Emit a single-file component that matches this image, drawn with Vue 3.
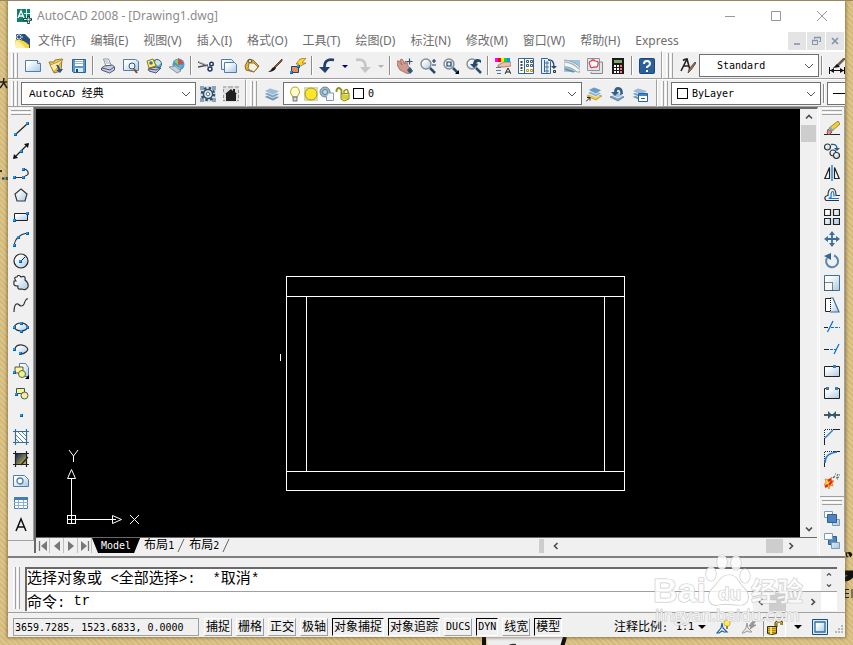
<script setup>
import { ref } from 'vue'

const menus = ['文件(F)', '编辑(E)', '视图(V)', '插入(I)', '格式(O)', '工具(T)', '绘图(D)', '标注(N)', '修改(M)', '窗口(W)', '帮助(H)', 'Express']

const standardBar = [
  'new', 'open', 'save', '|', 'print', 'preview', 'publish', 'globe', '|', 'cut', 'copy', 'paste', 'brush', 'block', '|',
  'undo', 'caret', 'redo', 'caretOff', '|', 'pan', 'zoom', 'zoomWindow', 'zoomPrev', '|',
  'properties', 'design', 'palettes', 'sheets', 'markup', 'calc', '|', 'help'
]
const drawBar = ['line', 'xline', 'pline', 'polygon', 'rect', 'arc', 'circle', 'cloud', 'spline', 'ellipse', 'ellipseArc', 'insert', 'makeBlock', 'point', 'hatch', 'gradient', 'region', 'table', 'mtext']
const modifyBar = ['erase', 'copyObj', 'mirror', 'offset', 'array', 'move', 'rotate', 'scale', 'stretch', 'trim', 'extend', 'breakPoint', 'break', 'join', 'chamfer', 'fillet', 'explode']
const orderBar = ['front', 'back']

const modes = [
  { text: '捕捉' }, { text: '栅格' }, { text: '正交' }, { text: '极轴' },
  { text: '对象捕捉', on: true }, { text: '对象追踪', on: true },
  { text: 'DUCS', latin: true }, { text: 'DYN', latin: true, on: true },
  { text: '线宽' }, { text: '模型', on: true }
]
const navs = ['first', 'prev', 'next', 'last']
const command = ref('tr')

const page = 'fill="url(#pale)" stroke="#4f7fa8"'
const dots = (...pts) => pts.map(([x, y]) => `<rect x="${x}" y="${y}" width="3" height="3" fill="#0a5fb0"/><rect x="${x}" y="${y}" width="2" height="2" fill="#1c9af5"/>`).join('')
const lens = '<path d="M10 10l5 5" stroke="#284b70" stroke-width="2.500"/><circle cx="6" cy="6" r="5" fill="url(#pale)" stroke="#8a8a8a" stroke-width="1.400"/>'
const stack = '<g stroke="#f4f7fa" stroke-width=".7"><path d="M0 11l6-3 10 3-7 4z" fill="#7893ad"/><path d="M0 8l6-3 10 3-7 4z" fill="#7fa3c4"/><path d="M0 5l6-3 10 3-7 4z" fill="#9dbbd6"/></g>'

const icons = {
  app: '<path d="M1 1h13v13H1z" fill="#12806f"/><path d="M2 10L5 3l3 7M3 8h4" stroke="#fff" stroke-width="1.300" fill="none"/><path d="M10.500 1v9M8 5.500h6" stroke="#d7f3ee"/><path d="M7 11.500h9M12.500 8v8" stroke="#163c46" stroke-width="2.500"/><path d="M8 11.500h7M12.500 9v6" stroke="#fff"/><path d="M11 10h3v3h-3z" fill="#cfe" stroke="#123c46" stroke-width=".8"/>',
  doc: '<path d="M1 1h9l5 5v9H1z" fill="#264f7e"/><path d="M0 7q8-1 14 5v3H1z" fill="#fcd638"/><path d="M1 8q6 1 9 7H1z" fill="#fff2a8"/><path d="M0 4h8M4 0v8M1.500 1.500l5 5M6.500 1.500l-5 5" stroke="#fff" stroke-width=".9"/><circle cx="4" cy="4" r="1.300" fill="#264f7e"/>',
  new: `<path d="M.5 2.500h12l3 3v8H.5z" ${page}/><path d="M12.500 2.500v3h3" fill="#fff" stroke="#4f7fa8"/>`,
  open: '<path d="M1 4h5l1-2 7-1-1 12-7 2z" fill="#f5cb55" stroke="#9a7a28"/><path d="M2 7l8-3 5-3-5 8-4 5z" fill="#ffe9a3" stroke="#a27e22" stroke-width=".7"/><path d="M8 7q3-1 4 4h3l-3 4-4-3h2Q10 9 8 7z" fill="#2c5687"/>',
  save: '<path d="M1.500 1.500h13v13h-12l-1-1z" fill="#5b9ad0" stroke="#2e638f"/><path d="M4 2h8v6H4z" fill="#fff"/><path d="M4 3.500h8M4 5.500h8" stroke="#9db6ce"/><path d="M4 10h8v4H4z" fill="#d9e8f5"/><path d="M5 11h2v3H5z" fill="#174b7d"/>',
  print: '<path d="M3.500 1h5l3 7H6z" fill="#fff" stroke="#8a93ab"/><path d="M1.500 10l3-2 8-1 2 2v3l-5 3-8-3z" fill="#c8cddd" stroke="#4d5878"/><path d="M2 10l8 2 4-3" stroke="#4d5878" fill="none"/><path d="M5 3h3M6 5h4" stroke="#9aa" fill="none"/>',
  preview: `<path d="M.5 1.500h12l3 2v9H.5z" ${page}/><path d="M11 11l3 4" stroke="#8a4f1b" stroke-width="2"/><circle cx="9" cy="8" r="3" fill="#e5f5ff" stroke="#3a526f"/>`,
  publish: '<circle cx="11" cy="6" r="4.500" fill="#5fa6d6" stroke="#37678d"/><path d="M10 2q4 0 5 3l-3 3-3-3z" fill="#cfe9d5"/><path d="M1 3l6-2 3 7-7 2z" fill="#fff06b" stroke="#9b761a"/><circle cx="5" cy="5" r="1.800" fill="#2577ba"/><path d="M2 11l8-2 5 1-5 5-7-2z" fill="#c1c8dc" stroke="#4d5878"/><path d="M3 11l7 1 4-2" stroke="#4d5878" fill="none"/>',
  globe: '<circle cx="9.500" cy="6.500" r="6" fill="#4a97cb"/><path d="M5 3l4 4V1z" fill="#7fcf74"/><path d="M9 7V0l6 5z" fill="#d54f3a"/><path d="M9 7h6l-5 5z" fill="#58b1d9"/><path d="M6 7l5 4-3 2-4-3z" fill="#f2db60"/><path d="M0 9l6-1 6 5-4 2z" fill="#c6cedb" stroke="#76839a" stroke-width=".8"/>',
  cut: '<path d="M0 4l10 4M0 9l10-2" stroke="#4a4d55" stroke-width="1.600"/><path d="M1 4l8 3" stroke="#ddd" stroke-width=".7"/><circle cx="13.500" cy="6" r="1.800" fill="none" stroke="#1d385d" stroke-width="1.400"/><circle cx="12" cy="11" r="2" fill="none" stroke="#1d385d" stroke-width="1.400"/>',
  copy: `<path d="M.5 1.500h10l2 2v8H.5z" ${page}/><path d="M3.500 4.500h10l2 2v8h-12z" ${page}/>`,
  paste: '<path d="M1 8l3-6 5 0 6 6-5 6-8-2z" fill="#eab72f" stroke="#8a6a22"/><circle cx="6" cy="3" r="1.800" fill="#ddd" stroke="#604b28"/><path d="M5 5h5l4 4-4 5-6-3z" fill="#f6f2e0" stroke="#89744a"/>',
  brush: '<path d="M15 1L7 9l1 1 7-7z" fill="#a45a22" stroke="#403428" stroke-width=".8"/><path d="M8 9q-3 0-4 3l-3 2q6 0 8-4z" fill="#1a1a1a"/>',
  block: '<path d="M1.500 8.500h7v6h-7z" fill="#f08a4a" stroke="#1c4683"/><path d="M10 1l6-1-4 5h4l-9 5 2-4H6z" fill="#ffd62b" stroke="#906815" stroke-width=".7"/>' + dots([7, 7], [0, 13]),
  undo: '<path d="M15 2Q5 0 5.500 10" fill="none" stroke="#203f6a" stroke-width="2.600"/><path d="M0 9h11l-5 6z" fill="#203f6a"/>',
  redo: '<path d="M1 2q10-2 9.500 8" fill="none" stroke="#c6c6ca" stroke-width="2.600"/><path d="M5 9h11l-6 6z" fill="#c6c6ca"/>',
  caret: '<path d="M5 7h6L8 10z" fill="#000080"/>',
  caretOff: '<path d="M5 7h6L8 10z" fill="#b4b4b4"/>',
  pan: '<path d="M0 3l2 0 3 4-2-5 2-1 3 5 0-3 2 1 1 4 4 4-4 4-4-2-4-2-3-5z" fill="#cf9a8f" stroke="#9a5a50" stroke-width=".7"/><path d="M10 12l3-3 3 4-3 3z" fill="#31577c"/><path d="M9.500 3.500h6M12.500 .5v6" stroke="#284e78" stroke-width="1.200"/>',
  zoom: lens + '<path d="M12 3h4M14 1v4M12 7h4" stroke="#193d69" stroke-width="1.200"/>',
  zoomWindow: lens + '<path d="M4 4h4v4H4z" fill="none" stroke="#24496d" stroke-width="1.200"/><path d="M16 12v4h-4z" fill="#000"/>',
  zoomPrev: lens + '<path d="M15 2q-7-3-8 4H4l4 4 4-4h-2q1-4 5-1z" fill="#214775"/>',
  properties: '<path d="M0 0h3v4H0z" fill="#f0f"/><path d="M3 0h3v4H3z" fill="#f00"/><path d="M6 0h3v4H6z" fill="#fe0"/><path d="M9 0h3v4H9z" fill="#0d3"/><path d="M12 0h3v4h-3z" fill="#09f"/><path d="M3 7l6-3 7 0v4l-7 1-6 0z" fill="#ecc0ac" stroke="#a07263" stroke-width=".8"/><path d="M1 9.500h5M1 12.500h5M2 15.500h4" stroke="#58799a"/><path d="M10 16l3-6 3 6m-5-2h4" stroke="#222" fill="none"/>',
  design: '<path d="M.5 .5h15v15H.5z" fill="#fff" stroke="#2f669c"/><path d="M6.500 1v14" stroke="#2f669c"/><path d="M3.500 3v10" stroke="#444" stroke-width="2" stroke-dasharray="2 1"/><g fill="none" stroke="#44566b"><path d="M8.500 2.500h2v2h-2zM12.500 2.500h2v2h-2zM8.500 6.500h2v2h-2zM12.500 6.500h2v2h-2z"/><path d="M8.500 11.500h2v2h-2zM12.500 11.500h2v2h-2z" stroke="#c09a00"/></g>',
  palettes: '<path d="M.5 .5h6l3 3v12h-9z" fill="#e6f1ff" stroke="#2f669c"/><path d="M3.500 2v12" stroke="#2f669c"/><path d="M5 4h2v2H5zM5 8h2v2H5zM5 12h2v2H5z" stroke="#44566b" stroke-width=".8" fill="none"/><path d="M7 2q6-1 6 7" fill="none" stroke="#244a72" stroke-width="1.400"/><path d="M10 8h6l-3 3z" fill="#244a72"/><path d="M12.500 12.500h2v2h-2z" fill="#edc64d" stroke="#333"/>',
  sheets: '<path d="M0 2h16v12H0z" fill="#9cc4e0"/><path d="M0 2q8 0 16 7v5l-3 0Q6 8 0 9z" fill="#f2f5f5" stroke="#8b979e" stroke-width=".8"/><path d="M1 4q7 0 14 7" stroke="#a9b6bc" fill="none" stroke-width="1.500"/><path d="M1 11l9 3" stroke="#6c8996" stroke-width="1.500"/>',
  markup: '<path d="M5 4h10.500v11.500H4V14" fill="#e4e4e4" stroke="#888"/><path d="M.5 .5h12v12H.5z" fill="#dce9f5" stroke="#8593a6"/><path d="M4 3q2-2 4 0 4 0 3 3 0 4-4 3-4 2-4-2-2-3 1-4z" fill="#fff" stroke="#f23030" stroke-width="1.200"/>',
  calc: '<path d="M2 0h12v16H2z" fill="#1a1a1a"/><path d="M4 2h8v3H4z" fill="#7da866"/><path d="M4 7h2v2H4zM7 7h2v2H7zM4 10h2v2H4zM7 10h2v2H7zM4 13h2v2H4zM7 13h2v2H7z" fill="#fff"/><path d="M10 7h2v2h-2zM10 10h2v2h-2zM10 13h2v2h-2z" fill="#f77"/>',
  help: '<rect x=".5" y=".5" width="15" height="15" rx="1" fill="#2b619b" stroke="#1c4674"/><path d="M5 6q0-3 3-3t3 3q0 1-3 3v1" stroke="#fff" stroke-width="2" fill="none"/><path d="M7 12h2v2H7z" fill="#fff"/>',
  textStyle: '<path d="M1 13L7 1l3 11M3 8h6M3 2.500q3-2 5-1" stroke="#222" stroke-width="1.600" fill="none"/><path d="M16 5l-5 7-3 3 1-4 6-7z" fill="#b06c45" stroke="#333" stroke-width=".7"/>',
  dim: '<path d="M.5 9v7M15.500 9v7M1 12.500h14" stroke="#111"/><path d="M5 10l-4 2.500 4 2.500zM11 10l4 2.500-4 2.500z" fill="#111"/><path d="M16 0L8 8" stroke="#6a5a4a" stroke-width="2.500"/><path d="M4 10l4-4 3 3z" fill="#111"/>',
  gear: '<path d="M0 0h16v16H0z" fill="#d9e1e7"/><path d="M0 0h4v4H0zM12 0h4v4h-4zM0 12h4v4H0zM12 12h4v4h-4z" fill="#8fa3b3"/><circle cx="8" cy="8" r="6" fill="none" stroke="#304f6a" stroke-width="2.500" stroke-dasharray="2.400 2.312"/><circle cx="8" cy="8" r="4.500" fill="#e6f0f6" stroke="#304f6a" stroke-width="1.500"/><circle cx="8" cy="8" r="1.800" fill="#fff" stroke="#54738c"/>',
  home: '<path d="M0 0h16v16H0z" fill="#e0e0e0"/><path d="M0 1h3M5 1h5M12 1h4M0 14.500h2M14 14.500h2M.5 3v3M15.500 4v3M.5 9v3M15.500 9v3" stroke="#8a959f"/><path d="M2 8l6-5 2 2V3h2v3l2 2h-1v7H3V8z" fill="#202020"/>',
  layers: stack,
  layerCurrent: '<path d="M1 10l6-3 9 3-6 4z" fill="#f4c737" stroke="#a08a2a" stroke-width=".6"/><path d="M1 7l6-3 9 3-6 4z" fill="#8db6da" stroke="#fff" stroke-width=".7"/><path d="M2 4l6-3 8 3-6 4z" fill="#6d9bc6" stroke="#fff" stroke-width=".7"/><path d="M0 15.500l4-4m-3 0h3v3" stroke="#222" fill="none"/>',
  layerPrev: '<path d="M1 11l6-3 8 3-6 4z" fill="#7c9fc0" stroke="#4a7196" stroke-width=".7"/><path d="M2 9l6-3 7 3-6 3z" fill="#a9c5de" stroke="#fff" stroke-width=".7"/><path d="M14 8Q14 0 8 1 5 2 5 6H2l4 4 4-4H8q0-3 2-2 2 1 1 5z" fill="#345f8d"/>',
  layerState: stack + '<path d="M6.500 7.500h9v8h-9z" fill="#fff" stroke="#286097"/><path d="M7 8h8v2H7z" fill="#3e87ca"/><path d="M9 12.500h4" stroke="#286097"/>',
  bulb: '<path d="M5.500 11q0-2-2-4 0-6 4.500-6t4.500 6q-2 2-2 4z" fill="#fffdd0" stroke="#b5a527"/><path d="M6 11h4v4H6z" fill="#d4d7e5" stroke="#50546b" stroke-width=".8"/>',
  sun: '<path d="M1 1h14v14H1z" fill="#d8d9a8"/><circle cx="8" cy="8" r="6" fill="#ffe626" stroke="#a09630"/>',
  freeze: '<circle cx="6" cy="6" r="5" fill="#9dbccb" stroke="#6c8799"/><circle cx="6" cy="6" r="2.500" fill="#c4d9e0" stroke="#607f91"/><path d="M10 7h4.500v7.500h-7V11" fill="#f6f8fd" stroke="#8895b6"/>',
  unlock: '<path d="M1.500 6V4q2-4 5 0v4" fill="none" stroke="#8d9013" stroke-width="1.800"/><path d="M6 8l8-1v6l-5 2-3-2z" fill="#f1ec5a" stroke="#858311"/><path d="M7 10h6M7 12h6" stroke="#aaa51e" stroke-width=".8"/><path d="M9 7V5q3-3 4 0v2" stroke="#8b8c17" stroke-width="1.300" fill="none"/>',
  line: '<path d="M2 14L14 3" stroke="#222" stroke-width="1.200"/>' + dots([1, 12], [13, 1]),
  xline: '<path d="M1 15L15 1" stroke="#222" stroke-width="1.200"/><path d="M0 16l1-5 4 4zM16 0l-1 5-4-4z" fill="#111"/>' + dots([7, 7]),
  pline: '<path d="M2 12.500h9M12 11q4-1 3-4-1-3-5-3" fill="none" stroke="#333" stroke-width="1.200"/>' + dots([0, 11], [9, 11], [9, 3]),
  polygon: '<path d="M8 2l6 5-2 7H4L2 7z" fill="url(#pale)" stroke="#3a3a3a" stroke-width="1.200"/>',
  rect: '<path d="M1.500 4.500h13v7h-13z" fill="url(#pale)" stroke="#222"/>' + dots([0, 10], [13, 3]),
  arc: '<path d="M1 14Q3 4 14 2" fill="none" stroke="#333" stroke-width="1.200"/>' + dots([0, 13], [4, 5], [13, 1]),
  circle: '<circle cx="8" cy="8" r="7" fill="url(#pale)" stroke="#222" stroke-width="1.200"/><path d="M8 8l4-4" stroke="#222"/>' + dots([6, 7]),
  cloud: '<path d="M3 6Q0 2 4 2q1-3 4 0 5-2 4 3 4 3 3 7-2 4-6 2-5 1-4-3-5 0-4-3 0-2 0-2z" fill="url(#pale)" stroke="#333" stroke-width="1.200"/>',
  spline: '<path d="M1 15Q1 6 5 7q4 4 6 0 2-6 4-5" fill="none" stroke="#333" stroke-width="1.200"/>',
  ellipse: '<ellipse cx="8" cy="8" rx="6.500" ry="4" fill="url(#pale)" stroke="#222" stroke-width="1.200"/>' + dots([7, 3], [7, 11], [0, 7], [13, 7]),
  ellipseArc: '<path d="M2 7q3-5 10-2 5 3 1 6-2 2-6 2" fill="url(#pale)" stroke="#333" stroke-width="1.200"/>' + dots([0, 7], [6, 11]),
  insert: `<path d="M6.500 .5h6l3 4v9h-9z" ${page}/><path d="M2 4h8v6H2z" fill="#fff59e" stroke="#525b32"/><circle cx="9" cy="11" r="3.500" fill="#edf296" stroke="#606838"/><path d="M16 12v4h-4z" fill="#000"/>` + dots([0, 8]),
  makeBlock: '<path d="M3.500 3.500h8v5h-8z" fill="#fff28d" stroke="#37575f"/><circle cx="11.500" cy="10.500" r="3.500" fill="#f1eda8" fill-opacity=".9" stroke="#56603c"/>' + dots([2, 8]),
  point: dots([7, 7]),
  hatch: '<path d="M3 3h10v10H3z" fill="#fff"/><path d="M3 6l7 7M3 10l3 3M5 3l8 8M9 3l4 4" stroke="#3678b4" stroke-width=".9"/><path d="M2.500 0v16M13.500 0v16M0 2.500h16M0 13.500h16" stroke="#3b6b92" stroke-width="1.200"/>',
  gradient: '<path d="M3 3h10v10H3z" fill="url(#dusk)"/><path d="M2.500 0v16M13.500 0v16M0 2.500h16M0 13.500h16M8 14l7-8" stroke="#222" stroke-width="1.200"/>',
  region: `<path d="M.5 2.500h11l4 4v7H.5z" ${page}/><circle cx="7" cy="8" r="3" fill="#fff" stroke="#4f7fa8" stroke-width="1.300"/>`,
  table: '<path d="M1.500 2.500h13v11h-13z" fill="#fff" stroke="#4f7fb2"/><path d="M1 2h14v3H1z" fill="#427db8"/><path d="M1 7.500h14M1 10.500h14M5.500 5v9M10.500 5v9" stroke="#8bb2d8"/>',
  mtext: '<path d="M3 14L8 2l5 12M5 10h6" stroke="#111" stroke-width="1.500" fill="none"/>',
  erase: '<path d="M0 13.500h16" stroke="#222"/><path d="M14 0l2 3-8 7-3-3z" fill="#f2cf35" stroke="#8a6b2c" stroke-width=".8"/><path d="M4 8l4 3-3 3-2-2z" fill="#ea8a82" stroke="#753d3a" stroke-width=".8"/><path d="M6 6l3 4" stroke="#6fb8cf" stroke-width="1.800"/>',
  copyObj: '<g fill="url(#pale)" stroke="#333" stroke-width="1.200"><circle cx="3.500" cy="4" r="3"/><circle cx="9" cy="10" r="3"/><circle cx="12.500" cy="12.500" r="3"/></g><path d="M7 1.500q6-1 6 4" stroke="#1d5f9e" stroke-width="1.400" fill="none"/><path d="M10 5h6l-3 3z" fill="#1d5f9e"/>',
  mirror: '<path d="M8 0v16" stroke="#087bde" stroke-width="1.300"/><path d="M5.500 2.500v11H.8zM10.500 2.500v11h4.700z" fill="#fff" stroke="#222" stroke-width="1.200"/>',
  offset: '<path d="M15 13.500H2q-3-4 2-5 0-7 4-7t4 7h4" fill="none" stroke="#333" stroke-width="1.200"/><path d="M15 11.500H5q0-1 2-1 0-6 1.500-6t1.500 5" fill="none" stroke="#087be0" stroke-width="1.200"/>',
  array: '<path d="M.5 .5h6v6h-6zM9.500 .5h6v6h-6zM.5 9.500h6v6h-6zM9.500 9.500h6v6h-6z" fill="url(#pale)" stroke="#222" stroke-width="1.200"/>',
  move: '<path d="M8 2v12M2 8h12" stroke="#3c6f9b" stroke-width="1.800"/><path d="M8 0l3 4H5zM8 16l3-4H5zM0 8l4-3v6zM16 8l-4-3v6z" fill="#3c6f9b"/>',
  rotate: '<path d="M3 5a6 6 0 1 0 7-2.500" fill="none" stroke="#5a86ab" stroke-width="2"/><path d="M0 3l7-3v7z" fill="#35658f"/>',
  scale: '<path d="M.5 .5h15v15H.5z" fill="url(#pale)" stroke="#3c6f9b"/><path d="M.5 7.500h8v8h-8z" fill="#f4f8fc" stroke="#111" stroke-dasharray="1 1"/>',
  stretch: '<path d="M6 1h3l6 14H6" fill="url(#pale)" stroke="#3c6f9b" stroke-width="1.200"/><path d="M6 14.500H1.500v-13H6" fill="#fff" stroke="#222"/><path d="M6.500 1v14" stroke="#111" stroke-dasharray="1 1"/>',
  trim: '<path d="M0 8.500h4" stroke="#222"/><path d="M3.500 13L9 2" stroke="#086fd5" stroke-width="1.300"/><path d="M7 8.500h9" stroke="#086fd5" stroke-dasharray="3 1"/>',
  extend: '<path d="M0 8.500h5" stroke="#222"/><path d="M6 8.500h6" stroke="#086fd5" stroke-dasharray="3 1"/><path d="M10 13l5-10" stroke="#086fd5" stroke-width="1.300"/>',
  breakPoint: '<path d="M.5 3.500h15v10H.5z" fill="url(#pale)" stroke="#222"/><path d="M9 2h3v3H9z" fill="#387bb6"/>',
  break: '<path d="M3 3.500H.5v10h15v-10H13" fill="url(#pale)" stroke="#222"/><path d="M2 2h3v3H2zM11 2h3v3h-3z" fill="#387bb6"/>',
  join: '<path d="M0 8h16" stroke="#222" stroke-width="1.500"/><path d="M4 4l4 4-4 4zM12 4L8 8l4 4z" fill="#315972"/>',
  chamfer: '<path d="M.5 16V9M9 .5h7" stroke="#222"/><path d="M.5 8V.5h8" fill="none" stroke="#222" stroke-dasharray="1 1"/><path d="M1 9l8-8" stroke="#2b7fd0" stroke-width="1.400"/>',
  fillet: '<path d="M.5 16V9M9 .5h7" stroke="#222"/><path d="M.5 8V.5h8" fill="none" stroke="#222" stroke-dasharray="1 1"/><path d="M1 12Q1 2 13 1" fill="none" stroke="#2b7fc8" stroke-width="1.700"/>',
  explode: '<path d="M8 4L7 7l3 1-2 2 1 3-3-1-1 4-2-4-3 0 2-3-1-3 4 1z" fill="#ffd93c" stroke="#e8691e" stroke-width=".7"/><path d="M1 14l3-2M4 8l3-2M5 12l3-4" stroke="#df271b" stroke-width="2.200"/><path d="M9 5l2-2M11 1h1M13 3l1-2M15 2h1M12 5l3-1M13 6h1" stroke="#52666b" stroke-width="1.100"/>',
  front: '<path d="M.5 .5h8v6h-8zM8.500 8.500h7v6h-7z" fill="url(#pale)" stroke="#7b9cb6"/><path d="M3.500 3.500h9v8h-9z" fill="#4f84bb" stroke="#2d6096"/>',
  back: '<path d="M4.500 3.500h8v8h-8z" fill="#4f84bb" stroke="#2d6096"/><path d="M.5 .5h8v6h-8zM7.500 9.500h8v6h-8z" fill="url(#pale)" stroke="#7b9cb6"/>',
  annoVisible: '<path d="M6 4l1 5 4 4H8l-2-1-3 2H1l4-5z" fill="#eef6ff" stroke="#245f9c" stroke-width="1.200"/><circle cx="11" cy="4" r="3.200" fill="#ffe95a" stroke="#c0a42a" stroke-width=".8"/><path d="M10 7h2v3h-2z" fill="#ac8427"/>',
  annoAuto: '<path d="M6 4l1 5 4 4H8l-2-1-3 2H1l4-5z" fill="#e8e8e8" stroke="#999"/><path d="M11 3l4-2-3 5h3l-6 4 1-3H8z" fill="#9a9a9a" stroke="#888" stroke-width=".7"/>',
  padlock: '<path d="M9 8V4q3-4 6 0v2" fill="none" stroke="#292000" stroke-width="2.800"/><path d="M9 7V4q3-3 6 0v2" fill="none" stroke="#e8c840" stroke-width="1.200"/><path d="M.5 7.500h9v7q-5 2-9 0z" fill="#e6bd1b" stroke="#392e07"/><path d="M1 9.500h8M1 11.500h8M1 13.500h8" stroke="#9d780d" stroke-width=".8"/><path d="M4 8v7" stroke="#fff4a2" stroke-width="1.500"/>',
  clean: '<path d="M.5 .5h15v15H.5z" fill="#dcebf8" stroke="#174f83"/><path d="M3 3h10v10H3z" fill="url(#pale)" stroke="#2c6da5" stroke-width="1.300"/>',
  first: '<path d="M4.500 3v10" stroke="#777" stroke-width="1.300"/><path d="M12 3v10L6 8z" fill="#777"/>',
  prev: '<path d="M11 3v10L5 8z" fill="#777"/>',
  next: '<path d="M5 3v10l6-5z" fill="#777"/>',
  last: '<path d="M4 3v10l6-5z" fill="#777"/><path d="M11.500 3v10" stroke="#777" stroke-width="1.300"/>',
  drop: '<path d="M4 6l4 4 4-4" fill="none" stroke="#555"/>',
  up: '<path d="M5 9.500l3-3 3 3" fill="none" stroke="#505050" stroke-width="1.700"/>',
  down: '<path d="M5 6.500l3 3 3-3" fill="none" stroke="#505050" stroke-width="1.700"/>',
  left: '<path d="M9.500 5l-3 3 3 3" fill="none" stroke="#505050" stroke-width="1.700"/>',
  right: '<path d="M6.500 5l3 3-3 3" fill="none" stroke="#505050" stroke-width="1.700"/>',
  min: '<path d="M3 8.500h10" stroke="#999"/>',
  max: '<path d="M3.500 3.500h9v9h-9z" fill="none" stroke="#999"/>',
  close: '<path d="M3 3l10 10M13 3L3 13" stroke="#999"/>',
  mdiMin: '<path d="M5 11h6" stroke="#8395aa" stroke-width="1.600"/>',
  mdiRestore: '<path d="M6.500 6V4.500h6v4H11M4.500 7.500h5v4h-5z" fill="none" stroke="#8395aa"/><path d="M6 4.500h7M4 7.500h6" stroke="#8395aa" stroke-width="1.500"/>',
  mdiClose: '<path d="M5 5l6 6M11 5l-6 6" stroke="#8395aa" stroke-width="1.700"/>'
}
</script>

<template>
  <div class="desktop">
    <svg class="defs" aria-hidden="true">
      <linearGradient id="pale" x1="0" y1="0" x2="1" y2="1"><stop offset="0.200" stop-color="#fff" /><stop offset="1" stop-color="#a9c9e4" /></linearGradient>
      <linearGradient id="dusk" x1="0" y1="0" x2="1" y2="1"><stop offset="0" stop-color="#172a5a" /><stop offset="1" stop-color="#c8b850" /></linearGradient>
    </svg>
    <svg class="wallpaper" aria-hidden="true">
      <path d="M0 81h7M4 77l-1 6-3 4M4 82l3 5" stroke="#222" stroke-width="1.500" fill="none" />
      <path d="M1 169v2M2 177.500h2" stroke="#333" stroke-width="2" fill="none" /><path d="M4 177.500h2" stroke="#4aa3c8" stroke-width="3" /><path d="M6 177.500h2" stroke="#8a4b22" stroke-width="3" />
      <path d="M846 554q5-1 3 0M845 572h6v3q-3 3-6 3" stroke="#111" stroke-width="5" fill="none" />
      <path d="M849 588.500h-4v8h4M845 592.500h4M852 588v9" stroke="#222" fill="none" />
      <path d="M486 636h78l-3 10h-73z" fill="#eee" />
      <path d="M484 636v10M565 636l-3 10" stroke="#111" stroke-width="4" fill="none" />
      <path d="M506 646q4-4 10-3v3z" fill="#333" />
    </svg>

    <main class="window">
      <header class="title">
        <svg class="ico" viewBox="0 0 16 16" v-html="icons.app" />
        <h1>AutoCAD 2008 - [Drawing1.dwg]</h1>
        <button v-for="b in ['min', 'max', 'close']" :key="b" class="sys" :aria-label="b"><svg class="ico" viewBox="0 0 16 16" v-html="icons[b]" /></button>
      </header>

      <nav class="menus">
        <svg class="ico" viewBox="0 0 16 16" v-html="icons.doc" />
        <button v-for="m in menus" :key="m" class="menu">{{ m }}</button>
        <span class="mdi">
          <button v-for="b in ['mdiMin', 'mdiRestore', 'mdiClose']" :key="b" :aria-label="b"><svg class="ico" viewBox="0 0 16 16" v-html="icons[b]" /></button>
        </span>
      </nav>

      <div class="row">
        <section class="bar wide">
          <i class="grip" />
          <template v-for="(n, i) in standardBar" :key="i">
            <i v-if="n === '|'" class="sep" />
            <button v-else class="tool" :class="{ slim: n.startsWith('caret') }" :aria-label="n"><svg class="ico" viewBox="0 0 16 16" v-html="icons[n]" /></button>
          </template>
        </section>
        <section class="bar rest">
          <i class="grip" />
          <button class="tool" aria-label="textStyle"><svg class="ico" viewBox="0 0 16 16" v-html="icons.textStyle" /></button>
          <span class="combo style"><select aria-label="style"><option>Standard</option></select><svg class="ico" viewBox="0 0 16 16" v-html="icons.drop" /></span>
          <i class="sep" />
          <button class="tool" aria-label="dim"><svg class="ico" viewBox="0 0 16 16" v-html="icons.dim" /></button>
        </section>
      </div>

      <div class="row">
        <section class="bar workspace">
          <i class="grip" />
          <span class="combo space"><select aria-label="workspace"><option>AutoCAD 经典</option></select><svg class="ico" viewBox="0 0 16 16" v-html="icons.drop" /></span>
          <button v-for="n in ['gear', 'home']" :key="n" class="tool" :aria-label="n"><svg class="ico" viewBox="0 0 16 16" v-html="icons[n]" /></button>
        </section>
        <section class="bar layer-bar">
          <i class="grip" />
          <button class="tool" aria-label="layers"><svg class="ico" viewBox="0 0 16 16" v-html="icons.layers" /></button>
          <span class="combo layer">
            <span class="state">
              <svg v-for="n in ['bulb', 'sun', 'freeze', 'unlock']" :key="n" class="ico" viewBox="0 0 16 16" v-html="icons[n]" />
              <i class="swatch" />
            </span>
            <select aria-label="layer"><option>0</option></select><svg class="ico" viewBox="0 0 16 16" v-html="icons.drop" />
          </span>
          <button v-for="n in ['layerCurrent', 'layerPrev', 'layerState']" :key="n" class="tool" :aria-label="n"><svg class="ico" viewBox="0 0 16 16" v-html="icons[n]" /></button>
        </section>
        <section class="bar rest">
          <i class="grip" />
          <span class="combo color"><span class="state"><i class="swatch" /></span><select aria-label="color"><option>ByLayer</option></select><svg class="ico" viewBox="0 0 16 16" v-html="icons.drop" /></span>
          <i class="sep" />
          <span class="combo linetype"><i class="dash" /></span>
        </section>
      </div>

      <div class="work">
        <aside class="dock">
          <div class="stack draw">
            <i class="grip flat" />
            <button v-for="n in drawBar" :key="n" class="tool" :aria-label="n"><svg class="ico" viewBox="0 0 16 16" v-html="icons[n]" /></button>
          </div>
        </aside>

        <section class="view">
          <div class="upper">
            <svg class="model" shape-rendering="crispEdges" fill="none" stroke="#fff">
              <path d="M250.500 167.500h338v214h-338zM250.500 187.500h338M250.500 362.500h338M270.500 187.500v175M568.500 187.500v175M244.500 245v7" />
              <path d="M35.500 406v-37M40 410.500h40M31.500 406.500h8v8h-8zM35.500 406v9M31 410.500h9" />
              <g shape-rendering="auto"><path d="M31.500 369.500l4-9 4 9zM76.500 406.500l9 4-9 4z" /><path d="M33 341l4.500 6 4.500-6M37.500 347v6M94 406l9 9M103 406l-9 9" /></g>
            </svg>
            <div class="vscroll">
              <svg class="ico" viewBox="0 0 16 16" v-html="icons.up" />
              <i class="thumb" />
              <svg class="ico end" viewBox="0 0 16 16" v-html="icons.down" />
            </div>
          </div>
          <div class="tabs">
            <button v-for="n in navs" :key="n" class="nav" :aria-label="n"><svg class="ico" viewBox="0 0 16 16" v-html="icons[n]" /></button>
            <div class="sheet active">
              <svg viewBox="0 0 48 15" preserveAspectRatio="none"><path d="M0 0h48l-6 15H6z" fill="#000" /></svg>
              <button class="mono">Model</button>
            </div>
            <div class="sheet"><button>布局<span class="mono">1</span></button><svg class="slash" viewBox="0 0 8 15"><path d="M7 1L1 14" stroke="#666" /></svg></div>
            <div class="sheet"><button>布局<span class="mono">2</span></button><svg class="slash" viewBox="0 0 8 15"><path d="M7 1L1 14" stroke="#666" /></svg></div>
            <div class="hscroll">
              <i class="split" />
              <svg class="ico" viewBox="0 0 16 16" v-html="icons.left" />
              <i class="thumb push" />
              <svg class="ico" viewBox="0 0 16 16" v-html="icons.right" />
            </div>
          </div>
        </section>

        <aside class="dock right">
          <div class="stack">
            <i class="grip flat" />
            <button v-for="n in modifyBar" :key="n" class="tool" :aria-label="n"><svg class="ico" viewBox="0 0 16 16" v-html="icons[n]" /></button>
          </div>
          <div class="stack order">
            <i class="grip flat" />
            <button v-for="n in orderBar" :key="n" class="tool" :aria-label="n"><svg class="ico" viewBox="0 0 16 16" v-html="icons[n]" /></button>
          </div>
        </aside>
      </div>

      <section class="command">
        <i class="grip" />
        <div class="console">
          <div class="history">
            <p>选择对象或<span class="lat">&nbsp;&lt;</span>全部选择<span class="lat">&gt;:&nbsp;&nbsp;*</span>取消<span class="lat">*</span></p>
            <div class="spin">
              <svg class="ico" viewBox="0 0 16 16" v-html="icons.up" />
              <svg class="ico" viewBox="0 0 16 16" v-html="icons.down" />
            </div>
          </div>
          <div class="prompt">
            <label for="cmd">命令<span class="lat">:</span></label>
            <input id="cmd" v-model="command" class="lat" type="text" autocomplete="off" spellcheck="false">
            <div class="pager">
              <svg class="ico" viewBox="0 0 16 16" v-html="icons.left" />
              <i class="thumb" />
              <svg class="ico push" viewBox="0 0 16 16" v-html="icons.right" />
            </div>
          </div>
        </div>
        <svg class="watermark" viewBox="0 0 156 76" aria-hidden="true">
          <g fill="#fff" fill-opacity=".8" stroke="#c4c4c4" stroke-opacity=".9" stroke-width="1.200" paint-order="stroke">
            <text x="1" y="50" font-family="Liberation Sans, sans-serif" font-size="34" font-weight="700">Bai</text>
            <text x="99" y="49" font-family="Noto Sans CJK SC, sans-serif" font-size="26" font-weight="700">经验</text>
            <ellipse cx="59" cy="22" rx="5" ry="7" /><ellipse cx="70" cy="10" rx="5" ry="7" /><ellipse cx="84" cy="11" rx="5" ry="7" /><ellipse cx="93" cy="24" rx="5" ry="7" />
            <path d="M77 23c9 0 9 8 15 13 7 7 5 17-4 17-8 0-14-2-22 0-10 1-12-9-6-16 6-5 8-14 17-14z" />
            <text x="66" y="48" font-family="Liberation Sans, sans-serif" font-size="19" font-weight="700">du</text>
            <text x="3" y="69" font-family="Open Sans, sans-serif" font-size="17">jingyan.baidu.com</text>
          </g>
        </svg>
      </section>

      <footer class="status">
        <output class="coords mono">3659.7285, 1523.6833, 0.0000</output>
        <button v-for="m in modes" :key="m.text" class="mode" :class="{ on: m.on, mono: m.latin }" :aria-pressed="!!m.on">{{ m.text }}</button>
        <span class="scale">注释比例<span class="mono">:</span></span>
        <button class="ratio"><span class="mono">1:1</span><i class="tri" /></button>
        <button class="tray" aria-label="annoVisible"><svg class="ico" viewBox="0 0 16 16" v-html="icons.annoVisible" /></button>
        <button class="tray" aria-label="annoAuto"><svg class="ico" viewBox="0 0 16 16" v-html="icons.annoAuto" /></button>
        <button class="tray sunk" aria-label="padlock"><svg class="ico" viewBox="0 0 16 16" v-html="icons.padlock" /></button>
        <button class="tray small" aria-label="more"><i class="tri" /></button>
        <button class="tray" aria-label="clean"><svg class="ico" viewBox="0 0 16 16" v-html="icons.clean" /></button>
        <svg class="sizer" viewBox="0 0 10 10"><path d="M7 0h2v2H7zM4 3h2v2H4zM7 3h2v2H7zM1 6h2v2H1zM4 6h2v2H4zM7 6h2v2H7z" fill="#b8b8b8" /></svg>
      </footer>
    </main>
  </div>
</template>

<style>
body { margin: 0; }
</style>

<style scoped>
* { box-sizing: border-box; }
.desktop {
  position: relative;
  height: 100vh;
  padding: 0 8px 8px;
  overflow: hidden;
  background: repeating-linear-gradient(45deg, #dcc58a 0 2px, #d3b97a 2px 4px);
  border-top: 1px solid #9a8560;
  font: 12px/16px "Liberation Sans", "Noto Sans CJK SC", sans-serif;
  color: #000;
}
.defs { position: absolute; width: 0; height: 0; }
.wallpaper { position: absolute; left: 0; top: 0; width: 100%; height: 100%; }
.window {
  position: relative;
  display: flex;
  flex-direction: column;
  height: 100%;
  background: #f0f0f0;
  box-shadow: 0 0 3px 1px rgba(80, 60, 20, .55);
}
button {
  display: flex;
  align-items: center;
  justify-content: center;
  padding: 0;
  border: 0;
  background: none;
  color: inherit;
  font: inherit;
}
.ico { display: block; flex: none; width: 16px; height: 16px; }
.mono { font-family: "DejaVu Sans Mono", monospace; font-size: 10px; }

.title { display: flex; flex: none; align-items: center; height: 30px; padding-left: 8px; background: #fff; }
.title h1 { flex: 1; margin: 0 0 0 5px; font: 12px/16px "Noto Sans", sans-serif; color: #8c8c8c; }
.sys { width: 46px; height: 30px; }

.menus { display: flex; flex: none; align-items: center; height: 20px; padding-left: 7px; background: #fff; }
.menus > .ico { margin-right: 7px; }
.menu { padding-right: 15px; font: 12px/18px "Noto Sans", "Noto Sans CJK SC", sans-serif; color: #6d6d6d; white-space: nowrap; }
.mdi { display: flex; gap: 1px; margin-left: auto; padding-right: 1px; }
.mdi button { width: 18px; height: 18px; background: #e4e4e4; }

.row { display: flex; flex: none; height: 28px; overflow: hidden; }
.bar { display: flex; flex: none; align-items: center; padding-top: 1px; border-top: 1px solid #fff; border-right: 1px solid #a0a0a0; border-bottom: 1px solid #a0a0a0; }
.bar + .bar { border-left: 1px solid #fff; }
.bar.wide { padding-right: 3px; }
.bar.rest { flex: 1; min-width: 0; overflow: hidden; border-right: 0; }
.grip {
  flex: none;
  width: 8px;
  height: 25px;
  margin: 0 2px 0 3px;
  background: linear-gradient(90deg, #fff 0 1px, #f0f0f0 1px 2px, #a0a0a0 2px 3px, #f0f0f0 3px 4px, #fff 4px 5px, #f0f0f0 5px 6px, #a0a0a0 6px 7px, #f0f0f0 7px);
}
.tool { flex: none; width: 23px; height: 23px; }
.slim { width: 13px; }
.sep { flex: none; width: 2px; height: 19px; margin: 0 2px; border-left: 1px solid #8c8c8c; border-right: 1px solid #fff; }
.combo {
  display: flex;
  flex: none;
  align-items: center;
  height: 23px;
  padding-right: 1px;
  border: 1px solid #707070;
  background: #fff;
}
.combo select {
  flex: 1;
  min-width: 0;
  padding: 0 0 0 4px;
  border: 0;
  appearance: none;
  background: #fff;
  color: #000;
  font: 10px/18px "DejaVu Sans Mono", "Noto Sans CJK SC", monospace;
}
.style { width: 120px; }
.combo.style select { padding-left: 17px; }
.space { width: 175px; }
.combo.space select { padding-left: 7px; font-size: 11px; font-family: "Liberation Mono", "Noto Sans CJK SC", monospace; }
.workspace { width: 238px; }
.layer-bar { width: 411px; }
.layer { width: 299px; }
.color { width: 150px; }
.linetype { width: 40px; }
.state { display: flex; align-items: center; padding-left: 3px; }
.swatch { width: 11px; height: 11px; margin-left: 2px; border: 1px solid #000; }
.dash { width: 40px; height: 1px; margin-left: 5px; background: #000; }

.work { display: flex; flex: 1; min-height: 0; }
.dock { flex: none; width: 26px; overflow: hidden; }
.stack { display: flex; flex-direction: column; align-items: center; border: solid #a0a0a0; border-width: 0 1px 1px 0; }
.stack .tool { height: 22px; }
.grip.flat {
  width: 20px;
  height: 8px;
  margin: 1px 0 2px;
  background: linear-gradient(#fff 0 1px, #f0f0f0 1px 2px, #a0a0a0 2px 3px, #f0f0f0 3px 4px, #fff 4px 5px, #f0f0f0 5px 6px, #a0a0a0 6px 7px, #f0f0f0 7px);
}
.draw { padding-bottom: 4px; }
.dock.right { border-left: 1px solid #fff; }
.dock.right .stack:first-child { padding-bottom: 4px; }
.order { border-bottom: 0; }
.view { display: flex; flex: 1; flex-direction: column; min-width: 0; margin: 0 1px 3px 0; border: solid #696969; border-width: 2px 1px 0 2px; border-right-color: #fff; }
.upper { display: flex; flex: 1; min-height: 0; }
.model { flex: 1; min-width: 0; height: 100%; background: #000; }
.vscroll { display: flex; flex: none; flex-direction: column; align-items: center; width: 17px; background: #f0f0f0; }
.vscroll .thumb { width: 15px; }
.vscroll .end { margin-top: auto; }
.thumb { flex: none; width: 17px; height: 17px; background: #cdcdcd; }
.tabs { display: flex; flex: none; height: 16px; border-top: 1px solid #696969; }
.nav { width: 14px; height: 15px; overflow: hidden; border-right: 1px solid #c0c0c0; }
.sheet { position: relative; display: flex; align-items: center; height: 15px; padding-left: 4px; }
.sheet.active { padding: 0 9px; color: #fff; }
.sheet.active svg { position: absolute; inset: 0; width: 100%; height: 100%; }
.sheet.active button { position: relative; }
.sheet button { line-height: 15px; }
.slash { width: 8px; height: 15px; margin-left: 3px; }
.hscroll { display: flex; align-items: center; width: 278px; margin-left: auto; padding-right: 18px; }
.split { width: 5px; height: 14px; margin-right: 4px; background: #cdcdcd; }
.thumb.push { height: 14px; }
.push { margin-left: auto; }

.command { position: relative; display: flex; flex: none; height: 57px; padding: 9px 8px 0 2px; border-top: 2px solid #808080; border-bottom: 1px solid #a0a0a0; }
.command .grip { height: 42px; margin-right: 4px; }
.console { flex: 1; min-width: 0; height: 44px; border: solid #696969; border-width: 2px 0 0 2px; background: #fff; }
.console { font: 15px/20px "Noto Sans CJK SC", sans-serif; }
.lat { font-family: "Liberation Mono", monospace; font-size: 14px; }
.history { display: flex; justify-content: space-between; height: 23px; border-bottom: 1px solid #a0a0a0; }
.history p { margin: 0; line-height: 16px; }
.spin { display: flex; flex-direction: column; justify-content: center; width: 16px; overflow: hidden; background: #f0f0f0; }
.spin .ico { height: 11px; }
.prompt { display: flex; height: 19px; line-height: 18px; }
.prompt input { flex: 1; min-width: 0; height: 18px; padding: 0 0 0 8px; border: 0; outline: 0; background: #fff; color: #000; }
.pager { display: flex; align-items: center; width: 68px; margin-right: 16px; background: #f0f0f0; }
.pager .thumb { height: 18px; }
.watermark { position: absolute; right: 37px; bottom: -16px; width: 156px; height: 76px; pointer-events: none; }

.status { display: flex; flex: none; align-items: center; gap: 4px; height: 24px; padding: 4px 1px 0 5px; white-space: nowrap; }
.coords { flex: none; width: 186px; height: 18px; margin-right: 1px; padding-left: 1px; border: 1px solid #a0a0a0; line-height: 18px; }
.mode { flex: none; min-width: 28px; height: 18px; padding: 0 1px; border: solid #fff; border-width: 1px; border-right-color: #a0a0a0; border-bottom-color: #a0a0a0; line-height: 16px; }
.mode.on { border-color: #000 #fff #fff #000; }
.mode.mono.on { min-width: 22px; }
.scale { margin-left: auto; }
.ratio { gap: 4px; margin-left: 4px; margin-right: 3px; }
.tri { width: 0; height: 0; border: solid transparent; border-width: 4px 4px 0; border-top-color: #000; }
.tray { flex: none; width: 21px; height: 20px; }
.tray.small { width: 15px; }
.tray.sunk { width: 23px; border: 1px solid #909090; border-right-color: #fff; border-bottom-color: #fff; }
.sizer { align-self: flex-end; width: 10px; height: 10px; margin-bottom: 2px; }
</style>
